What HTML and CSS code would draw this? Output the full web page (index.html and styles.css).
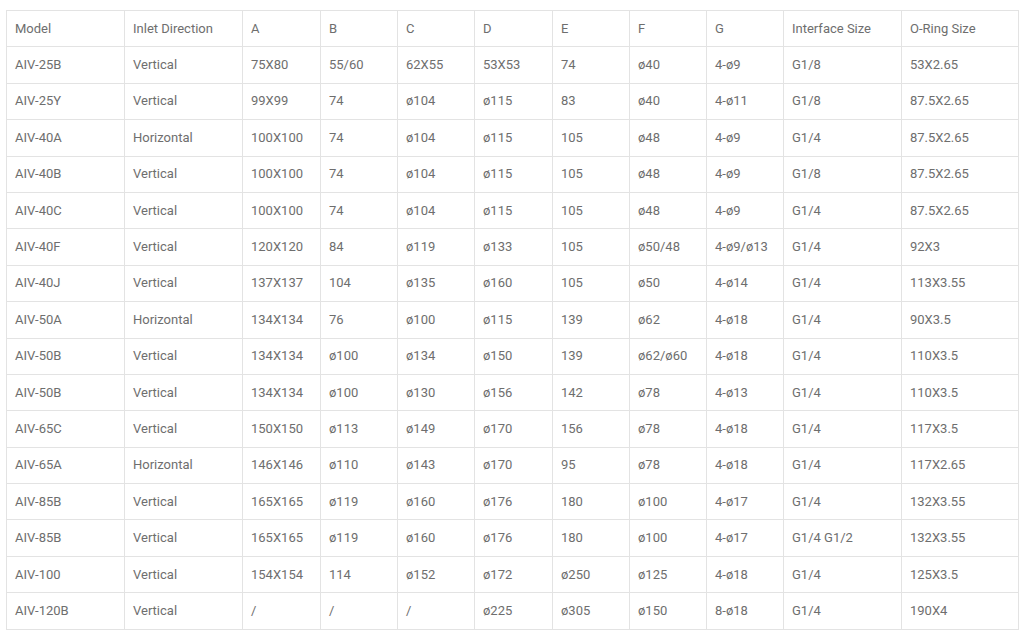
FILE: index.html
```html
<!DOCTYPE html>
<html>
<head>
<meta charset="utf-8">
<link rel="stylesheet" href="styles.css">
</head>
<body>
<table class="spec">
<colgroup>
<col class="c-model"><col class="c-inlet"><col class="c-a"><col class="c-s"><col class="c-s"><col class="c-a"><col class="c-s"><col class="c-s"><col class="c-g"><col class="c-if"><col class="c-or">
</colgroup>
<tbody>
<tr><td>Model</td><td>Inlet Direction</td><td>A</td><td>B</td><td>C</td><td>D</td><td>E</td><td>F</td><td>G</td><td>Interface Size</td><td>O-Ring Size</td></tr>
<tr><td>AIV-25B</td><td>Vertical</td><td>75X80</td><td>55/60</td><td>62X55</td><td>53X53</td><td>74</td><td>ø40</td><td>4-ø9</td><td>G1/8</td><td>53X2.65</td></tr>
<tr><td>AIV-25Y</td><td>Vertical</td><td>99X99</td><td>74</td><td>ø104</td><td>ø115</td><td>83</td><td>ø40</td><td>4-ø11</td><td>G1/8</td><td>87.5X2.65</td></tr>
<tr><td>AIV-40A</td><td>Horizontal</td><td>100X100</td><td>74</td><td>ø104</td><td>ø115</td><td>105</td><td>ø48</td><td>4-ø9</td><td>G1/4</td><td>87.5X2.65</td></tr>
<tr><td>AIV-40B</td><td>Vertical</td><td>100X100</td><td>74</td><td>ø104</td><td>ø115</td><td>105</td><td>ø48</td><td>4-ø9</td><td>G1/8</td><td>87.5X2.65</td></tr>
<tr><td>AIV-40C</td><td>Vertical</td><td>100X100</td><td>74</td><td>ø104</td><td>ø115</td><td>105</td><td>ø48</td><td>4-ø9</td><td>G1/4</td><td>87.5X2.65</td></tr>
<tr><td>AIV-40F</td><td>Vertical</td><td>120X120</td><td>84</td><td>ø119</td><td>ø133</td><td>105</td><td>ø50/48</td><td>4-ø9/ø13</td><td>G1/4</td><td>92X3</td></tr>
<tr><td>AIV-40J</td><td>Vertical</td><td>137X137</td><td>104</td><td>ø135</td><td>ø160</td><td>105</td><td>ø50</td><td>4-ø14</td><td>G1/4</td><td>113X3.55</td></tr>
<tr><td>AIV-50A</td><td>Horizontal</td><td>134X134</td><td>76</td><td>ø100</td><td>ø115</td><td>139</td><td>ø62</td><td>4-ø18</td><td>G1/4</td><td>90X3.5</td></tr>
<tr><td>AIV-50B</td><td>Vertical</td><td>134X134</td><td>ø100</td><td>ø134</td><td>ø150</td><td>139</td><td>ø62/ø60</td><td>4-ø18</td><td>G1/4</td><td>110X3.5</td></tr>
<tr><td>AIV-50B</td><td>Vertical</td><td>134X134</td><td>ø100</td><td>ø130</td><td>ø156</td><td>142</td><td>ø78</td><td>4-ø13</td><td>G1/4</td><td>110X3.5</td></tr>
<tr><td>AIV-65C</td><td>Vertical</td><td>150X150</td><td>ø113</td><td>ø149</td><td>ø170</td><td>156</td><td>ø78</td><td>4-ø18</td><td>G1/4</td><td>117X3.5</td></tr>
<tr><td>AIV-65A</td><td>Horizontal</td><td>146X146</td><td>ø110</td><td>ø143</td><td>ø170</td><td>95</td><td>ø78</td><td>4-ø18</td><td>G1/4</td><td>117X2.65</td></tr>
<tr><td>AIV-85B</td><td>Vertical</td><td>165X165</td><td>ø119</td><td>ø160</td><td>ø176</td><td>180</td><td>ø100</td><td>4-ø17</td><td>G1/4</td><td>132X3.55</td></tr>
<tr><td>AIV-85B</td><td>Vertical</td><td>165X165</td><td>ø119</td><td>ø160</td><td>ø176</td><td>180</td><td>ø100</td><td>4-ø17</td><td>G1/4 G1/2</td><td>132X3.55</td></tr>
<tr><td>AIV-100</td><td>Vertical</td><td>154X154</td><td>114</td><td>ø152</td><td>ø172</td><td>ø250</td><td>ø125</td><td>4-ø18</td><td>G1/4</td><td>125X3.5</td></tr>
<tr><td>AIV-120B</td><td>Vertical</td><td>/</td><td>/</td><td>/</td><td>ø225</td><td>ø305</td><td>ø150</td><td>8-ø18</td><td>G1/4</td><td>190X4</td></tr>
</tbody>
</table>
</body>
</html>
```

FILE: styles.css
```css
html, body {
  margin: 0;
  padding: 0;
  background: #ffffff;
}
body {
  padding: 10px 6px 0 6px;
  font-family: Roboto, "Liberation Sans", Arial, sans-serif;
  font-size: 13px;
  color: #6e6e6e;
}
.spec {
  width: 1012px;
  border-collapse: collapse;
  table-layout: fixed;
}
.spec td {
  border: 1px solid #e3e3e3;
  padding: 0 8px;
  height: 35.4px;
  line-height: 16px;
  text-align: left;
  vertical-align: middle;
  white-space: nowrap;
}
.c-model { width: 118px; }
.c-inlet { width: 118px; }
.c-a { width: 78px; }
.c-s { width: 77px; }
.c-g { width: 77px; }
.c-if { width: 118px; }
.c-or { width: 117px; }
```
